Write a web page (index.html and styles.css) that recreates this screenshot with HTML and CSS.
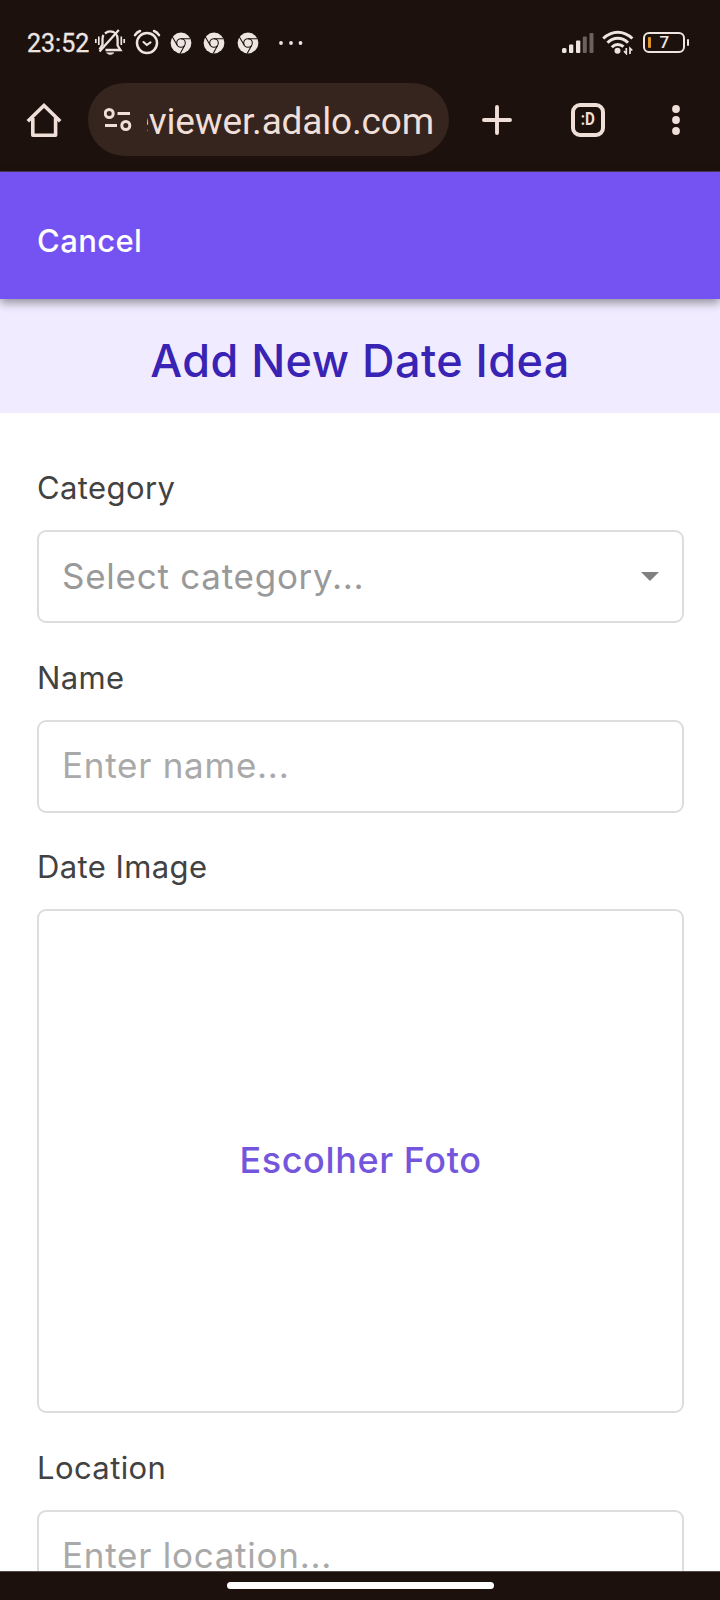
FILE: index.html
```
<!DOCTYPE html>
<html lang="en">
<head>
<meta charset="utf-8">
<title>Add New Date Idea</title>
<link rel="stylesheet" href="styles.css">
</head>
<body>
<div class="phone">
  <svg class="defs" width="0" height="0" aria-hidden="true">
    <symbol id="chrome" viewBox="0 0 22 22">
      <circle cx="11" cy="11" r="10.4" fill="#eee5e1"/>
      <g fill="none" stroke="#1d110d" stroke-width="1.1">
        <circle cx="11" cy="11" r="4.3"/>
        <path d="M11 6.7H20.4M7.3 13.2L2.4 5M14.7 13.2L10.2 21.4"/>
      </g>
    </symbol>
  </svg>

  <header class="status">
    <span class="time">23:52</span>
    <svg class="bell" width="32" height="28" viewBox="0 0 32 28" fill="none" stroke="#eee5e1" stroke-width="2.3">
      <path d="M8.5 11V17.500M11 5.500Q13.500 3.4 16 3.4C20.5 3.4 23.6 6.5 23.6 11V17.5L26.5 22H11.5M8.5 11Q8.5 8.500 9.500 7M8.5 16.500L5.500 21.500"/>
      <path d="M24.800 2L5.5 23.5"/>
      <path d="M12.500 24.800H20Q16.3 28.4 12.5 24.8Z" fill="#eee5e1" stroke-width="0.6"/>
      <path d="M4.800 8.500V17M1.800 11V15M27.300 8.500V17M30.200 11V15" stroke-width="1.7"/>
    </svg>
    <svg class="alarm" width="28" height="26" viewBox="0 0 28 26" fill="none" stroke="#eee5e1" stroke-linecap="round">
      <circle cx="14" cy="14" r="10" stroke-width="2.5"/>
      <path d="M2 6.2Q3.8 3.2 7 2M26 6.2Q24.2 3.2 21 2" stroke-width="2.5"/>
      <path d="M10.5 13L13.8 16L17.5 13.3" stroke-width="2.1"/>
    </svg>
    <div class="apps">
      <svg width="22" height="22"><use href="#chrome"/></svg>
      <svg width="22" height="22"><use href="#chrome"/></svg>
      <svg width="22" height="22"><use href="#chrome"/></svg>
    </div>
    <svg class="more" width="24" height="6" viewBox="0 0 24 6" fill="#eee5e1"><circle cx="2" cy="3" r="1.9"/><circle cx="12" cy="3" r="1.9"/><circle cx="21.500" cy="3" r="1.9"/></svg>
    <svg class="signal" width="33" height="22" viewBox="0 0 33 22">
      <g fill="#eee5e1"><rect x="1" y="16" width="4.500" height="5" rx="1.500"/><rect x="8" y="12.500" width="4.300" height="8.500" rx="1"/><rect x="15" y="8.500" width="4.300" height="12.500" rx="1"/></g>
      <g fill="#6c615d"><rect x="21.800" y="4.500" width="4" height="16.500" rx="1"/><rect x="28.500" y="1" width="4" height="20" rx="1"/></g>
    </svg>
    <svg class="wifi" width="32" height="25" viewBox="0 0 32 25" fill="none" stroke="#eee5e1" stroke-width="3">
      <path d="M1.200 8.500Q8 2.200 15.800 2.200T30.400 8.500M5.500 12.800Q10 8.300 15.800 8.300T26 12.800M9.800 17.200Q12.500 14.400 15.800 14.400T21.500 16.600"/>
      <circle cx="15.500" cy="20.800" r="3" fill="#eee5e1" stroke="none"/>
      <path d="M24.300 18V23.500L22 21.200M28 24V18.200L30.300 20.500" stroke-width="1.700"/>
    </svg>
    <div class="battery"><i class="charge"></i><span>7</span></div>
    <i class="battery-cap"></i>
  </header>

  <nav class="toolbar">
    <svg class="home" width="36" height="36" viewBox="0 0 36 36" fill="none" stroke="#efdfd8" stroke-width="3.600" stroke-linejoin="round">
      <path d="M6.800 16V33.200H29.600V16"/><path d="M1.800 19.200L18 3.500L34.200 19.200" stroke-linejoin="miter"/>
    </svg>
    <div class="address">
      <svg class="tune" width="28" height="24" viewBox="0 0 28 24" fill="none" stroke="#efdfd8" stroke-width="3">
        <circle cx="5.200" cy="5.500" r="4"/><path d="M13.500 5.500H26M1 17.500H13"/><circle cx="21.800" cy="17.500" r="4"/>
      </svg>
      <div class="url"><span>eviewer.adalo.com</span></div>
    </div>
    <svg class="plus" width="30" height="30" viewBox="0 0 30 30" stroke="#efdfd8" stroke-width="3.900" stroke-linecap="round"><path d="M15 2V28M2 15H28"/></svg>
    <div class="tabs"><span>:D</span></div>
    <svg class="menu" width="8" height="30" viewBox="0 0 8 30" fill="#efdfd8"><circle cx="4" cy="4" r="3.900"/><circle cx="4" cy="15" r="3.900"/><circle cx="4" cy="26" r="3.900"/></svg>
  </nav>

  <div class="appbar"><span class="cancel">Cancel</span></div>
  <div class="banner"><h1 class="title">Add New Date Idea</h1></div>

  <main class="form">
    <section class="field">
      <div class="label">Category</div>
      <div class="box select"><span>Select category...</span>
        <svg width="18" height="9" viewBox="0 0 18 9"><path d="M0 0H18L9 9Z" fill="#808080"/></svg>
      </div>
    </section>
    <section class="field">
      <div class="label">Name</div>
      <div class="box">Enter name...</div>
    </section>
    <section class="field">
      <div class="label">Date Image</div>
      <div class="box photo">Escolher Foto</div>
    </section>
    <section class="field">
      <div class="label">Location</div>
      <div class="box">Enter location...</div>
    </section>
  </main>

  <footer class="gesture"><i class="handle"></i></footer>
</div>
</body>
</html>
```
FILE: styles.css
```
* { box-sizing: border-box; }
body { margin: 0; background: #fff; }
.phone {
  width: 720px; height: 1600px; overflow: hidden;
  display: flex; flex-direction: column;
  font-family: Inter, "Liberation Sans", sans-serif;
}
.defs { display: block; flex: none; }
svg { display: block; flex: none; }

.status {
  flex: none; height: 78px; padding: 8px 31px 0 27px;
  display: flex; align-items: center;
  background: #1d110d; color: #eee5e1;
}
.time { width: 67px; font: 400 25px/30px Roboto, sans-serif; padding-top: 2px; -webkit-text-stroke: .3px #eee5e1; }
.bell { margin-top: -2px; }
.alarm { margin: -2px 0 0 7px; }
.apps { display: flex; gap: 11.4px; margin: -1px 0 0 9px; }
.more { margin: -1px 0 0 20px; }
.signal { margin: 0 0 0 auto; }
.wifi { margin: -1px 0 0 8px; }
.battery {
  width: 42px; height: 21px; margin: -1px 0 0 9px; padding: 0 0 0 3px;
  display: flex; align-items: center; gap: 9px;
  border: 2px solid #eee5e1; border-radius: 6px;
  font: 500 17px/17px Roboto, sans-serif;
}
.charge { width: 2.500px; height: 11px; background: #dc9526; border-radius: 1px; }
.battery-cap { width: 2.500px; height: 7px; margin: -1px 0 0 1.500px; background: #eee5e1; border-radius: 1px; }

.toolbar {
  flex: none; height: 94px; padding: 0 40px 10px 26px;
  display: flex; align-items: center;
  background: #1d110d; border-bottom: 1px solid #4b3a5c;
}
.address {
  width: 361px; height: 73px; margin-left: 26px; padding: 0 15px 0 16px;
  display: flex; align-items: center; border-radius: 37px;
  background: #36251e;
}
.url {
  margin-left: 15px; flex: 1; overflow: hidden; height: 50px; padding-top: 3px;
  display: flex; justify-content: flex-end;
  font: 400 37px/47px Roboto, sans-serif; letter-spacing: -.17px; color: #efdfd8; white-space: nowrap;
}
.plus { margin-left: 33px; }
.tabs {
  width: 34px; height: 34px; margin-left: 58.5px; padding-bottom: 1px;
  display: flex; align-items: center; justify-content: center;
  border: 4px solid #efdfd8; border-radius: 9px;
  font: 700 19px/20px Roboto, sans-serif; color: #efdfd8;
}
.tabs span { transform: scaleX(.8); }
.menu { margin-left: auto; }

.appbar {
  flex: none; height: 127px; padding: 49px 37px 0; z-index: 1;
  background: #7553f2; box-shadow: 0 4px 9px rgba(0, 0, 0, .38);
}
.cancel { display: block; font-size: 31px; line-height: 40px; font-weight: 500; color: #fff; letter-spacing: .4px; }
.banner { flex: none; height: 114px; background: #f0ebfe; padding-top: 32px; }
.title { margin: 0; text-align: center; font-size: 45px; line-height: 60px; font-weight: 500; color: #3923b4; letter-spacing: .45px; }

.form { flex: 1; min-height: 0; overflow: hidden; padding: 55px 36px 0 37px; display: flex; flex-direction: column; gap: 34.5px; }
.field { flex: none; display: flex; flex-direction: column; gap: 22px; }
.label { font-size: 31px; line-height: 40px; color: #424242; letter-spacing: .4px; }
.box {
  height: 93px; padding: 0 23px 2px; display: flex; align-items: center;
  border: 2px solid #ddd; border-radius: 9px;
  font-size: 35px; color: #a9a9a9; letter-spacing: .74px;
}
.select { justify-content: space-between; color: #999; }
.select svg { margin-top: 2px; }
.photo { height: 504px; padding-bottom: 3px; justify-content: center; font-size: 36px; font-weight: 500; color: #7456dc; letter-spacing: .6px; }

.gesture { flex: none; height: 29px; padding-top: 10px; background: #1d110d; border-top: 1px solid #554a47; }
.handle { display: block; width: 267px; height: 7px; margin: 0 auto; border-radius: 4px; background: #fff; }
```
